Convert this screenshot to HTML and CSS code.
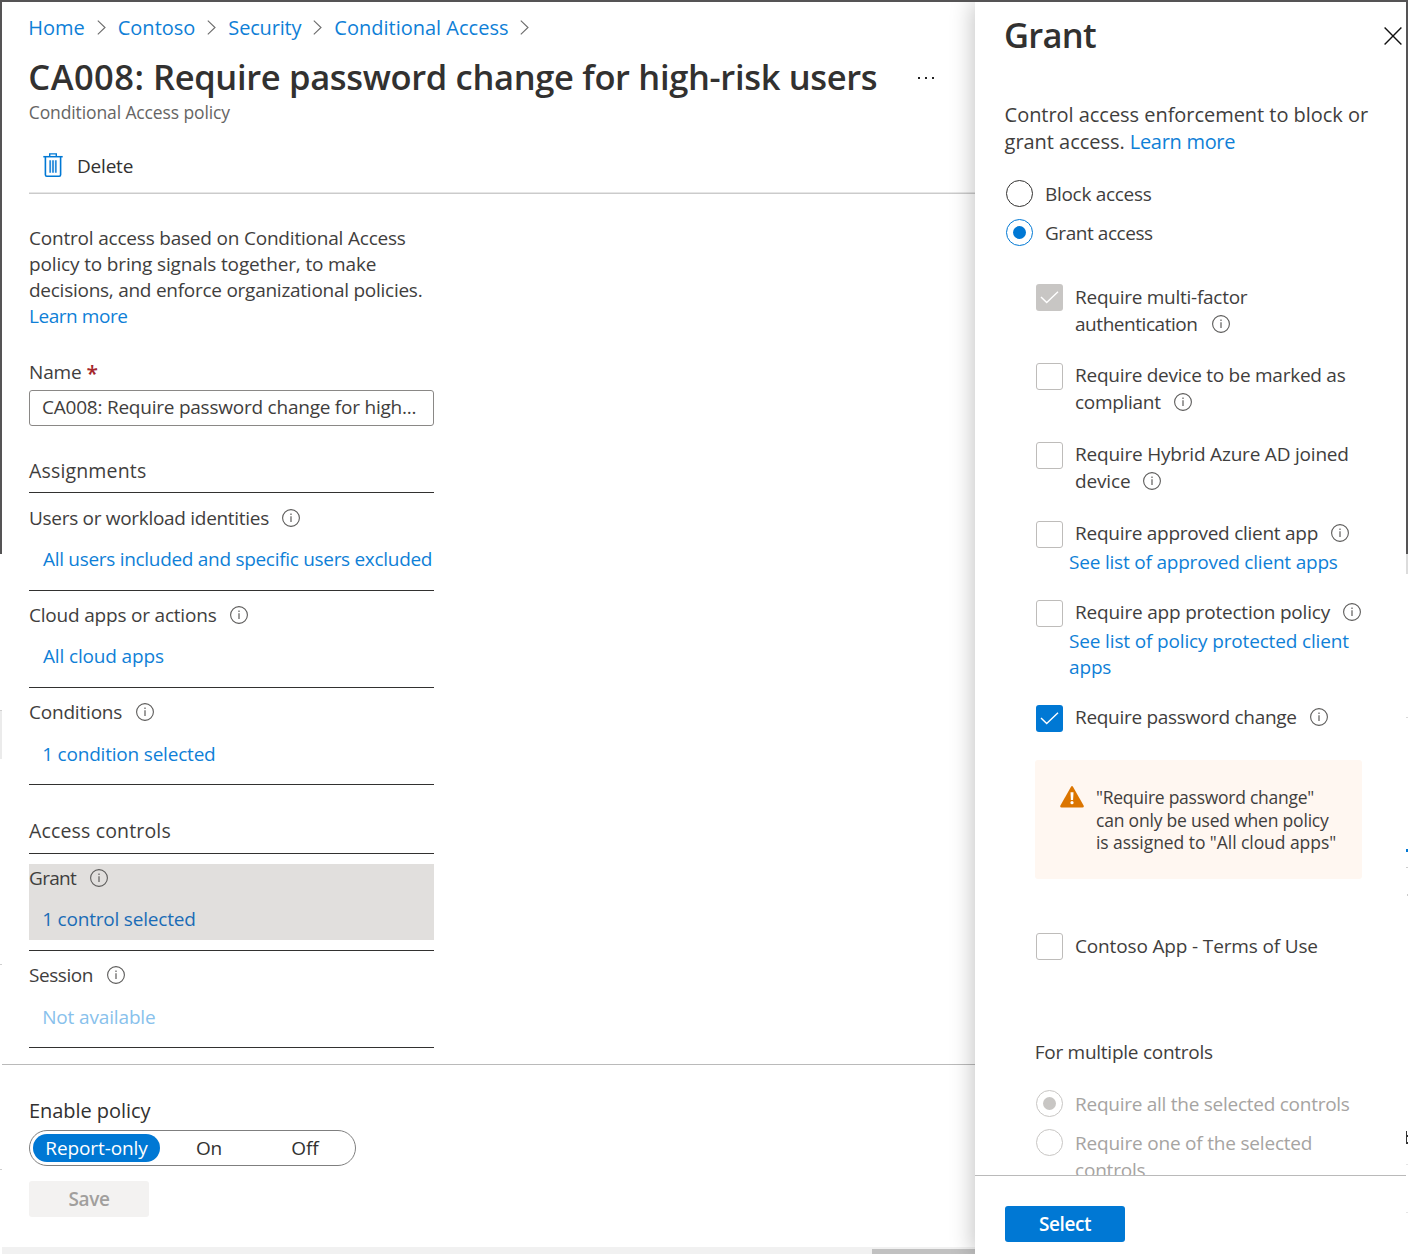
FILE: index.html
```html
<!DOCTYPE html>
<html lang="en">
<head>
<meta charset="utf-8">
<title>CA008: Require password change for high-risk users</title>
<link rel="stylesheet" href="styles.css">
</head>
<body>
<svg class="defs" aria-hidden="true">
  <symbol id="info" viewBox="0 0 18 18"><circle cx="9" cy="9" r="8.4" fill="none" stroke="currentColor" stroke-width="1.1"/><path d="M9 7.2V13" stroke="currentColor" stroke-width="1.2"/><path d="M9 4.6V6" stroke="currentColor" stroke-width="1.2"/></symbol>
  <symbol id="chevron" viewBox="0 0 9 15"><path d="M.8.6 8 7.5.8 14.4" fill="none" stroke="currentColor" stroke-width="1.1"/></symbol>
  <symbol id="check" viewBox="0 0 27 27"><path d="M5 12.9 10.7 18.6 22 7.8" fill="none" stroke="#fff" stroke-width="1.4"/></symbol>
</svg>
<div class="window">
  <div class="edge edge-left"></div>
  <main class="main">
    <header class="header">
      <nav class="crumbs">
        <a>Home</a><svg class="chev"><use href="#chevron"/></svg>
        <a>Contoso</a><svg class="chev"><use href="#chevron"/></svg>
        <a class="snug">Security</a><svg class="chev"><use href="#chevron"/></svg>
        <a>Conditional Access</a><svg class="chev"><use href="#chevron"/></svg>
      </nav>
      <div class="title-row">
        <h1><span class="code">CA008:</span> Require password change for high-risk users</h1>
        <div class="more"><i></i><i></i><i></i></div>
      </div>
      <p class="subtitle">Conditional Access policy</p>
      <div class="toolbar">
        <svg class="trash" viewBox="0 0 20 24"><path d="M.3 3.7H19.7" stroke="#0078d4" stroke-width="1.5"/><path d="M6.7 3.4V.9H13.3V3.4" fill="none" stroke="#0078d4" stroke-width="1.4"/><path d="M2.4 4V21.8Q2.4 23.2 3.8 23.2H16.2Q17.6 23.2 17.6 21.8V4" fill="none" stroke="#0078d4" stroke-width="1.6"/><path d="M7.2 7.3V19.7M10 7.3V19.7M12.8 7.3V19.7" stroke="#2b8cdb" stroke-width="1.8"/></svg>
        <span>Delete</span>
      </div>
    </header>
    <section class="form">
      <p class="intro">Control access based on Conditional Access<br><span class="loose">policy to bring signals together, to make</span><br><span class="mid">decisions, and enforce organizational policies.</span><br><a class="tight">Learn more</a></p>
      <div class="name-label"><span class="loose">Name</span><b>*</b></div>
      <div class="field">CA008: Require password change for high...</div>

      <h2>Assignments</h2>
      <div class="item first"><div class="inner">
        <div class="label"><span class="snug">Users or workload identities</span><svg class="info"><use href="#info"/></svg></div>
        <a class="value alpha snug">All users included and specific users excluded</a>
      </div></div>
      <div class="item"><div class="inner">
        <div class="label"><span>Cloud apps or actions</span><svg class="info"><use href="#info"/></svg></div>
        <a class="value alpha loose">All cloud apps</a>
      </div></div>
      <div class="item low"><div class="inner">
        <div class="label"><span>Conditions</span><svg class="info"><use href="#info"/></svg></div>
        <a class="value">1 condition selected</a>
      </div></div>

      <h2 class="second">Access controls</h2>
      <div class="item"><div class="inner selected">
        <div class="label"><span class="tighter">Grant</span><svg class="info"><use href="#info"/></svg></div>
        <a class="value">1 control selected</a>
      </div></div>
      <div class="item low"><div class="inner">
        <div class="label"><span class="tight">Session</span><svg class="info wide"><use href="#info"/></svg></div>
        <a class="value loose unavailable">Not available</a>
      </div></div>
    </section>
    <footer class="policy-footer">
      <div class="enable">Enable policy</div>
      <div class="switch"><span class="on">Report-only</span><span>On</span><span>Off</span></div>
      <button class="btn save">Save</button>
    </footer>
    <div class="scrollbar"><div class="thumb"></div></div>
  </main>

  <aside class="panel">
    <div class="panel-body">
      <div class="panel-head">
        <h1>Grant</h1>
        <svg class="close" viewBox="0 0 18 18"><path d="M.6.6 17.4 17.4M17.4.6.6 17.4" stroke="#111" stroke-width="1.4"/></svg>
      </div>
      <p class="panel-intro">Control access enforcement to block or<br>grant access. <a class="snug">Learn more</a></p>
      <div class="radios">
        <div class="radio"><i></i><span class="snug">Block access</span></div>
        <div class="radio picked"><i></i><span class="tight">Grant access</span></div>
      </div>
      <div class="checks">
        <div class="check h79 low"><div class="box off-on"><svg><use href="#check"/></svg></div>
          <div class="text"><span class="mid">Require multi-factor</span><br><span class="tight">authentication</span><svg class="info wide"><use href="#info"/></svg></div></div>
        <div class="check h79"><div class="box"></div>
          <div class="text"><span class="mid">Require device to be marked as</span><br><span class="snug">compliant</span><svg class="info"><use href="#info"/></svg></div></div>
        <div class="check h79"><div class="box"></div>
          <div class="text"><span>Require Hybrid Azure AD joined</span><br><span class="loose">device</span><svg class="info"><use href="#info"/></svg></div></div>
        <div class="check h79"><div class="box"></div>
          <div class="text"><span class="mid">Require approved client app</span><svg class="info"><use href="#info"/></svg><a class="list">See list of approved client apps</a></div></div>
        <div class="check h105"><div class="box"></div>
          <div class="text"><span>Require app protection policy</span><svg class="info"><use href="#info"/></svg><a class="list loose">See list of policy protected client<br>apps</a></div></div>
        <div class="check h27"><div class="box on"><svg><use href="#check"/></svg></div>
          <div class="text"><span class="snug">Require password change</span><svg class="info"><use href="#info"/></svg></div></div>
        <div class="warning">
          <svg viewBox="0 0 24 22"><path d="M10.9.9Q12-.7 13.1.9L23.6 19.6Q24.3 21.5 22.4 21.5H1.6Q-.3 21.5.4 19.6Z" fill="#db7500"/><path d="M10.5 6.2H13.5L13.1 14H10.9Z" fill="#fff"/><circle cx="12" cy="16.7" r="1.6" fill="#fff"/></svg>
          <p><span class="mid">"Require password change"</span><br><span>can only be used when policy</span><br><span class="none">is assigned to "All cloud apps"</span></p>
        </div>
        <div class="check h27 low"><div class="box"></div>
          <div class="text"><span class="loose">Contoso App - Terms of Use</span></div></div>
        <div class="multi mid">For multiple controls</div>
        <div class="radio faded picked"><i></i><span class="mid">Require all the selected controls</span></div>
        <div class="radio faded"><i></i><span>Require one of the selected<br>controls</span></div>
      </div>
    </div>
    <footer class="panel-footer"><button class="btn select">Select</button></footer>
  </aside>
  <div class="edge edge-right"></div>
</div>
</body>
</html>
```
FILE: styles.css
```css
* { box-sizing: border-box; }
body {
  margin: 0;
  background: #fff;
  color: #3f3e3d;
  font: 19px/28px "Open Sans", "Noto Sans", sans-serif;
  letter-spacing: -0.2px;
}
h1, h2, p { margin: 0; font-weight: 400; }
a { color: #0f7fd7; }
svg { display: block; }
.defs { width: 0; height: 0; position: absolute; }

/* letter fitting */
.none { letter-spacing: -0.06px; }
.loose { letter-spacing: -0.15px; }
.mid { letter-spacing: -0.26px; }
.snug { letter-spacing: -0.3px; }
.tight { letter-spacing: -0.45px; }
.tighter { letter-spacing: -0.68px; }

.window {
  display: grid;
  grid-template-columns: 2px 973px 431px 2px;
  width: 1408px;
  height: 1256px;
  border-top: 2px solid #555455;
  overflow: hidden;
}
.edge-left {
  background:
    linear-gradient(#555455, #555455) 0 0 / 2px 552px no-repeat,
    linear-gradient(#d0d0d0, #d0d0d0) 0 708px / 2px 1px no-repeat,
    linear-gradient(#ebebeb, #ebebeb) 0 709px / 2px 48px no-repeat,
    linear-gradient(#cfcfcf, #cfcfcf) 0 962px / 2px 1px no-repeat,
    linear-gradient(#cfcfcf, #cfcfcf) 0 1167px / 2px 1px no-repeat;
}
.edge-right {
  background:
    linear-gradient(#555455, #555455) 0 0 / 2px 552px no-repeat,
    linear-gradient(#dcdcdc, #dcdcdc) 0 552px / 2px 20px no-repeat,
    linear-gradient(#d8d8d8, #d8d8d8) 0 715px / 2px 1px no-repeat,
    linear-gradient(#0078d4, #0078d4) 0 847px / 2px 3px no-repeat,
    linear-gradient(#cccccc, #cccccc) 0 865px / 2px 1px no-repeat,
    linear-gradient(#cccccc, #cccccc) 1px 892px / 1px 2px no-repeat,
    linear-gradient(#333333, #333333) 0 1129px / 1px 13px no-repeat,
    linear-gradient(#333333, #333333) 1px 1133px / 1px 2px no-repeat,
    linear-gradient(#333333, #333333) 1px 1140px / 1px 2px no-repeat,
    linear-gradient(#e5e5e5, #e5e5e5) 0 1162px / 2px 1px no-repeat,
    linear-gradient(#e5e5e5, #e5e5e5) 0 1210px / 2px 1px no-repeat;
}

/* main blade */
.main {
  height: 1252px;
  display: grid;
  grid-template-rows: 192px 870px 183px 7px;
}
.header { padding: 10px 0 0 27px; }
.crumbs {
  display: flex;
  align-items: center;
  height: 30px;
  padding-top: 1px;
  margin-left: -0.8px;
  font-size: 20px;
  letter-spacing: 0;
}
.crumbs a { padding-top: 1px; }
.crumbs .snug { letter-spacing: -0.18px; }
.crumbs .chev { width: 9px; height: 15px; margin: 0 12px; color: #6b6b6b; }
.title-row { display: flex; align-items: center; height: 48px; margin-top: 10px; }
h1 {
  font-size: 34.5px;
  font-weight: 600;
  line-height: 48px;
  color: #323130;
  letter-spacing: -0.33px;
  white-space: nowrap;
}
.code { letter-spacing: 0.45px; }
.title-row h1 { margin-left: -0.7px; width: 889.2px; padding-top: 2px; }
.more { display: flex; gap: 5.3px; margin-top: 4px; }
.more i { width: 2px; height: 2px; background: #222; }
.subtitle {
  margin-left: -0.2px;
  font-size: 17.5px;
  line-height: 24px;
  color: #666564;
  letter-spacing: -0.12px;
}
.toolbar {
  display: flex;
  align-items: center;
  gap: 14px;
  height: 56px;
  margin-top: 14px;
  padding: 0 0 2px 14px;
  border-bottom: 1px solid #cbcbcb;
  box-shadow: inset 0 -1px #e6e6e6;
  color: #323130;
}
.toolbar span { padding-top: 2px; }
.trash { width: 20px; height: 24px; }

.form { width: 432px; padding: 31px 0 0 27px; }
.intro { line-height: 26px; white-space: nowrap; }
.name-label { display: flex; height: 28px; margin: 29px 0 4px; }
.name-label b { margin: 1px 0 0 5px; font-size: 21px; font-weight: 600; color: #a4262c; }
.field {
  height: 36px;
  padding: 0 0 0 12px;
  border: 1px solid #8a8886;
  border-radius: 3px;
  line-height: 33px;
  letter-spacing: -0.23px;
  white-space: nowrap;
}
h2 {
  height: 38px;
  margin-top: 29px;
  font-size: 19.5px;
  line-height: 31px;
  letter-spacing: 0.16px;
  border-bottom: 1px solid #323130;
}
h2.second { margin-top: 31px; line-height: 29px; }
.item { height: 97px; padding-top: 10px; border-bottom: 1px solid #323130; }
.item.first { height: 98px; padding-top: 11px; }
.inner { height: 76px; }
.selected { background: #e1dfdd; }
.label { display: flex; align-items: center; height: 28px; white-space: nowrap; }
.first .info { margin-top: -1px; }
.info { width: 18px; height: 18px; margin-left: 13.5px; color: #5c5b5a; flex: none; }
.info.wide { margin-left: 14.5px; }
.value { display: block; margin-top: 13px; padding-left: 13.2px; white-space: nowrap; }
.low .value { margin-top: 14px; }
.value.alpha { padding-left: 14px; }
.selected .value { color: #1a6cb6; }
.unavailable { color: #88c1ec; }

.policy-footer { padding: 30px 0 0 27px; border-top: 1px solid #bababa; color: #323130; }
.enable { height: 30px; line-height: 32px; font-size: 20px; letter-spacing: -0.05px; }
.switch {
  display: grid;
  grid-template-columns: 127px 98px 94px;
  width: 327px;
  height: 36px;
  margin-top: 5px;
  padding: 3px;
  border: 1px solid #7f7f7f;
  border-radius: 18px;
  line-height: 29px;
  text-align: center;
  letter-spacing: -0.1px;
}
.switch .on { height: 28px; border-radius: 14px; background: #0078d4; color: #fff; }
.btn {
  display: block;
  width: 120px;
  height: 36px;
  padding: 1px 0 0;
  border: 0;
  border-radius: 3px;
  font: 600 19px/35px "Open Sans", sans-serif;
  letter-spacing: -0.4px;
  text-align: center;
}
.save { margin-top: 15px; background: #f3f2f1; color: #a19f9d; }
.select { background: #0078d4; color: #fff; }
.scrollbar { padding-top: 2px; background: #f1f1f1; }
.thumb { height: 5px; margin-left: 870px; background: #c1c1c1; }

/* grant panel */
.panel {
  height: 1252px;
  display: grid;
  grid-template-rows: 1173px 79px;
  background: #fff;
  box-shadow: -2px 0 22px rgba(0, 0, 0, 0.24);
  clip-path: inset(0 0 0 -40px);
}
.panel-body { overflow: hidden; padding: 8px 4px 0 29px; }
.panel-head { display: flex; justify-content: space-between; align-items: center; height: 50px; }
.panel-head h1 { letter-spacing: -0.7px; }
.close { width: 18px; height: 18px; margin-top: 2px; }
.panel-intro { margin: 41px 0 0 0.6px; font-size: 20px; line-height: 27px; letter-spacing: -0.04px; white-space: nowrap; }
.radios { display: grid; gap: 12px; margin: 25px 0 0 2px; }
.radio { display: flex; gap: 12px; height: 27px; line-height: 29px; white-space: nowrap; }
.radio span { line-height: 27px; padding-top: 1px; }
.radio i {
  display: grid;
  place-items: center;
  flex: none;
  width: 27px;
  height: 27px;
  border: 1px solid #323130;
  border-radius: 50%;
}
.picked i { border-color: #0078d4; }
.picked i::after { content: ""; width: 13px; height: 13px; border-radius: 50%; background: #0078d4; }
.faded { color: #a6a4a2; }
.faded i { border-color: #c8c6c4; }
.faded.picked i::after { background: #c8c6c4; }

.checks { margin: 38px 0 0 32px; }
.check { display: flex; gap: 12px; }
.h79 { height: 79px; }
.h105 { height: 105px; }
.h27 { height: 27px; }
.box { flex: none; width: 27px; height: 27px; border: 1px solid #bebcba; border-radius: 3px; }
.box.on { background: #0078d4; border: 0; }
.box.off-on { background: #c8c6c4; border: 0; }
.box svg { width: 27px; height: 27px; }
.text { margin-top: -1.5px; line-height: 27px; white-space: nowrap; }
.low .text { margin-top: -0.5px; }
.text .info { display: inline-block; vertical-align: -2px; margin-left: 13px; }
.text .info.wide { margin-left: 14px; }
.list { display: block; margin: 2px 0 0 -6px; line-height: 26px; }
.warning {
  display: flex;
  width: 327px;
  height: 119px;
  margin: 28px 0 54px -1px;
  padding: 26px 0 0 25px;
  border-radius: 3px;
  background: #fff7f1;
  font-size: 17.5px;
  line-height: 22.5px;
  white-space: nowrap;
}
.warning svg { width: 24px; height: 22px; margin-right: 12px; }
.multi { margin: 78px 0 24px -1.3px; }
.checks .radio + .radio { margin-top: 12px; }
.panel-footer { padding: 30px 0 0 30px; border-top: 1px solid #bababa; }
```
